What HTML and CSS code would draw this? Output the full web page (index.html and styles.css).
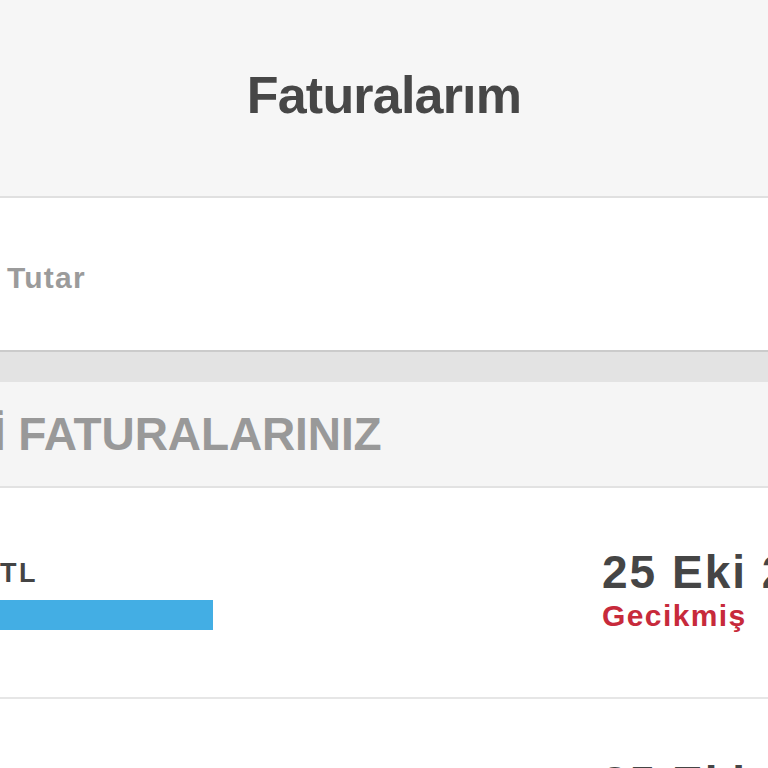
FILE: index.html
```html
<!DOCTYPE html>
<html lang="tr">
<head>
<meta charset="utf-8">
<title>Faturalarım</title>
<link rel="stylesheet" href="styles.css">
</head>
<body>
<div class="page">
  <header class="topbar">
    <h1 class="title">Faturalarım</h1>
  </header>
  <section class="summary">
    <div class="summary-label">Tutar</div>
  </section>
  <div class="band"></div>
  <section class="section-head">
    <h2 class="section-title">İ FATURALARINIZ</h2>
  </section>
  <div class="bill">
    <div class="bill-left">
      <div class="bill-amount">TL</div>
      <div class="bill-bar" style="width:213px"></div>
    </div>
    <div class="bill-right">
      <div class="bill-date">25 Eki 2019</div>
      <div class="bill-status">Gecikmiş</div>
    </div>
  </div>
  <div class="bill">
    <div class="bill-left">
      <div class="bill-amount">TL</div>
      <div class="bill-bar" style="width:213px"></div>
    </div>
    <div class="bill-right">
      <div class="bill-date">25 Eki 2019</div>
      <div class="bill-status">Gecikmiş</div>
    </div>
  </div>
</div>
</body>
</html>
```

FILE: styles.css
```css
* { box-sizing: border-box; }
html, body { margin: 0; padding: 0; }
body {
  background: #ffffff;
  font-family: "Liberation Sans", Arial, Helvetica, sans-serif;
  font-weight: bold;
  width: 768px;
  height: 768px;
  overflow: hidden;
}
.page { width: 768px; overflow: hidden; }

.topbar {
  height: 198px;
  background: #f6f6f6;
  border-bottom: 2px solid #e0e0e0;
  padding-top: 69px;
  display: flex;
  justify-content: center;
}
.title {
  margin: 0;
  font-size: 52px;
  line-height: 52px;
  letter-spacing: -0.8px;
  color: #474747;
  font-weight: bold;
}

.summary {
  height: 154px;
  background: #ffffff;
  border-bottom: 2px solid #cbcbcb;
  padding-top: 65px;
  padding-left: 7px;
}
.summary-label {
  font-size: 30px;
  line-height: 30px;
  letter-spacing: 1.2px;
  color: #9b9b9b;
}

.band {
  height: 30px;
  background: #e3e3e3;
}

.section-head {
  height: 106px;
  background: #f5f5f5;
  border-bottom: 2px solid #e2e2e2;
  padding-top: 29px;
  white-space: nowrap;
}
.section-title {
  margin: 0;
  font-size: 46px;
  line-height: 46px;
  letter-spacing: -0.1px;
  color: #999999;
  font-weight: bold;
  text-indent: -7px;
}

.bill {
  height: 211px;
  border-bottom: 2px solid #e6e6e6;
  display: grid;
  grid-template-columns: 602px 1fr;
  white-space: nowrap;
}
.bill-left { padding-top: 72px; }
.bill-amount {
  font-size: 27px;
  line-height: 27px;
  letter-spacing: 2.5px;
  color: #444444;
}
.bill-bar {
  height: 30px;
  margin-top: 13px;
  background: #43aee4;
}
.bill-right { padding-top: 61px; }
.bill-date {
  font-size: 46px;
  line-height: 46px;
  letter-spacing: 2px;
  color: #454545;
}
.bill-status {
  margin-top: 6px;
  font-size: 30px;
  line-height: 30px;
  letter-spacing: 1.4px;
  color: #c72a3b;
}
```
